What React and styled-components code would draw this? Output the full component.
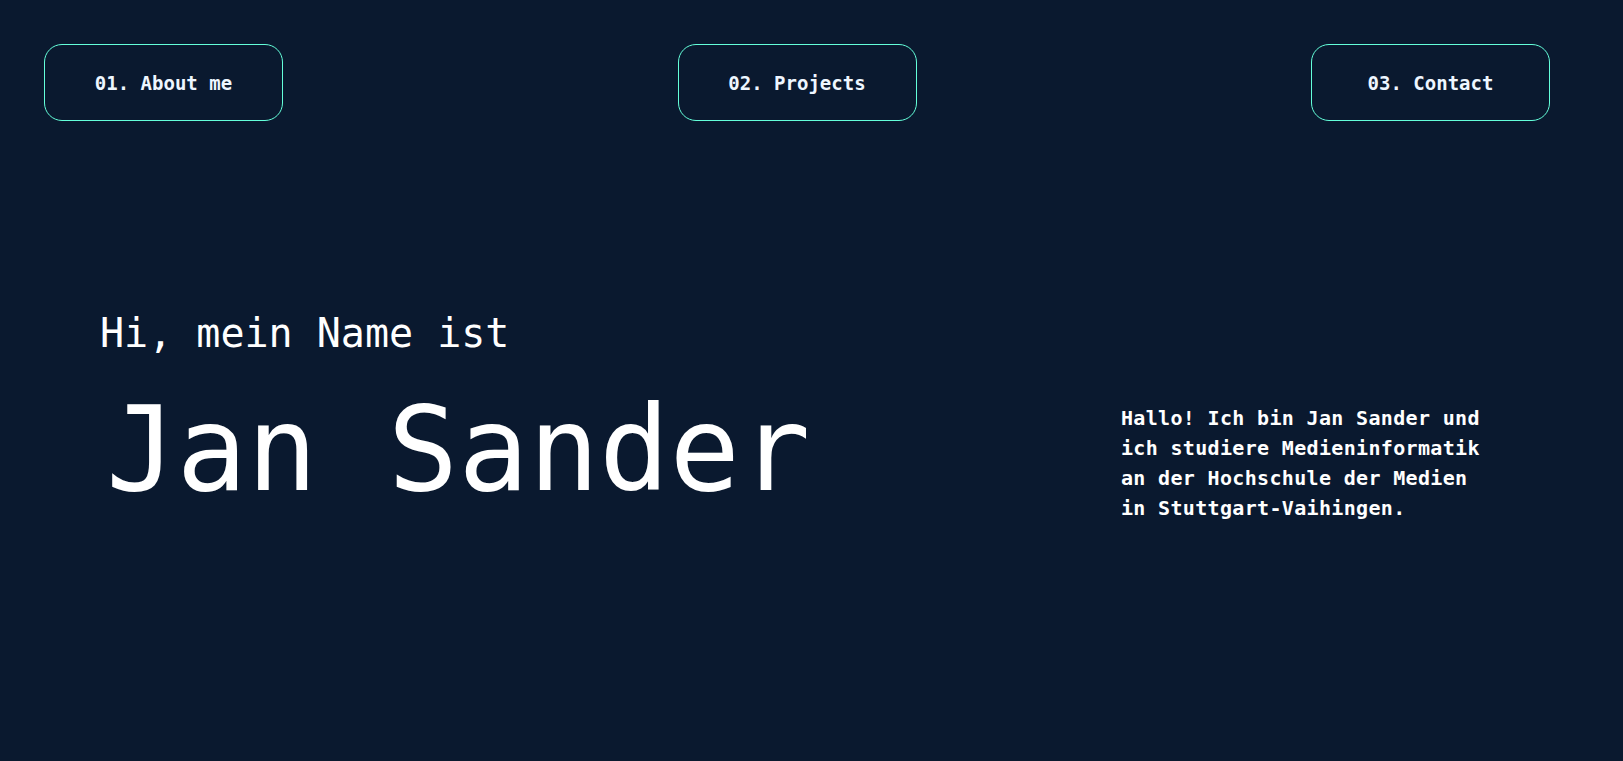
import { createGlobalStyle, styled } from 'styled-components';

const GlobalStyle = createGlobalStyle`
    html, body {
        margin: 0;
        padding: 0;
        background: #0a192f;
    }
    body {
        min-height: 100vh;
        font-family: 'DejaVu Sans Mono', 'Liberation Mono', monospace;
        color: #ffffff;
    }
`;

const links = ['01. About me', '02. Projects', '03. Contact'];

export default function App() {
    return (
        <>
            <GlobalStyle />
            <Page>
                <Nav>
                    {links.map((label) => (
                        <NavButton key={label}>{label}</NavButton>
                    ))}
                </Nav>
                <Hero>
                    <Intro>
                        <Greeting>Hi, mein Name ist</Greeting>
                        <Name>Jan Sander</Name>
                    </Intro>
                    <About>
                        Hallo! Ich bin Jan Sander und
                        <br />
                        ich studiere Medieninformatik
                        <br />
                        an der Hochschule der Medien
                        <br />
                        in Stuttgart-Vaihingen.
                    </About>
                </Hero>
            </Page>
        </>
    );
}

const Page = styled.main`
    width: 100%;
    min-height: 761px;
    background: #0a192f;
`;

const Nav = styled.nav`
    display: flex;
    justify-content: space-between;
    align-items: center;
    padding: 44px 73px 0 44px;
`;

const NavButton = styled.button`
    width: 239px;
    height: 77px;
    border: 1px solid #64ffda;
    border-radius: 18px;
    background: transparent;
    color: #eef6ff;
    font-family: 'DejaVu Sans Mono', 'Liberation Mono', monospace;
    font-size: 19px;
    font-weight: 700;
    cursor: pointer;
`;

const Hero = styled.section`
    display: flex;
    align-items: flex-start;
    margin-top: 188px;
    padding: 0 130px 0 100px;
`;

const Intro = styled.div`
    flex: 1;
    display: flex;
    flex-direction: column;
    gap: 33px;
`;

const Greeting = styled.h2`
    margin: 0;
    font-size: 40px;
    font-weight: 400;
    line-height: 48px;
`;

const Name = styled.h1`
    margin: 0 0 0 6px;
    font-size: 117px;
    font-weight: 400;
    line-height: 120px;
`;

const About = styled.p`
    width: 372px;
    margin: 94px 0 0;
    font-size: 20px;
    font-weight: 700;
    line-height: 30px;
    letter-spacing: 0.33px;
    white-space: nowrap;
`;
